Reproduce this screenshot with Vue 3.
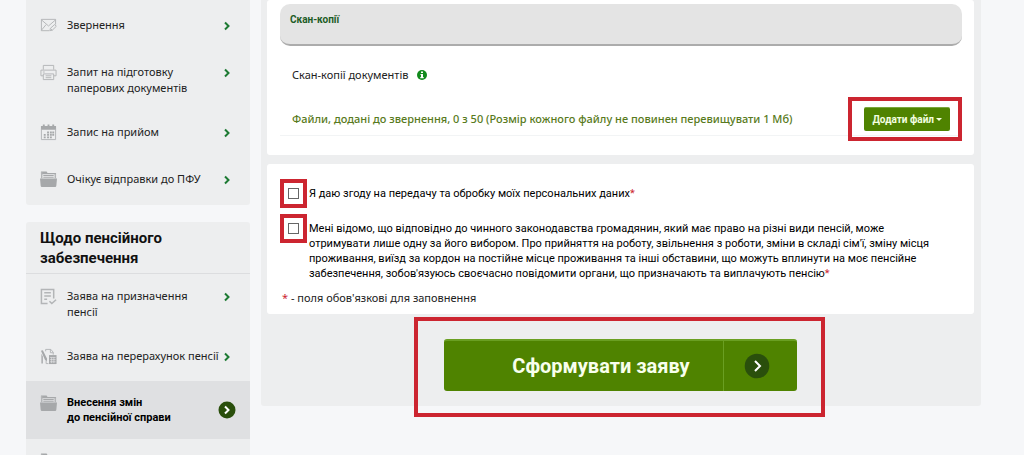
<template>
  <div class="page">
    <aside class="sidebar">
      <nav class="menu menu-requests" aria-label="Запити">
        <a v-for="item in requests" :key="item.label" class="menu-item" href="#">
          <svg class="menu-icon" viewBox="0 0 18 18" aria-hidden="true">
            <path v-for="(p, i) in icons[item.icon]" :key="i" :d="p.d" :class="p.type" />
          </svg>
          <span class="menu-label">{{ item.label }}</span>
          <svg class="menu-arrow" viewBox="0 0 18 18" aria-hidden="true">
            <path d="M7 5.5 L10.5 9 L7 12.5" />
          </svg>
        </a>
      </nav>

      <nav class="menu" aria-labelledby="pension-title">
        <h2 id="pension-title" class="menu-title">Щодо пенсійного забезпечення</h2>
        <a
          v-for="item in pensions"
          :key="item.label"
          class="menu-item"
          :class="{ active: item.active }"
          href="#"
        >
          <svg class="menu-icon" viewBox="0 0 18 18" aria-hidden="true">
            <path v-for="(p, i) in icons[item.icon]" :key="i" :d="p.d" :class="p.type" />
          </svg>
          <span class="menu-label">{{ item.label }}</span>
          <svg class="menu-arrow" viewBox="0 0 18 18" aria-hidden="true">
            <circle v-if="item.active" cx="9" cy="9" r="8.5" />
            <path d="M7 5.5 L10.5 9 L7 12.5" />
          </svg>
        </a>
      </nav>
    </aside>

    <main class="content">
      <section class="card files-card">
        <h3 class="section-title">Скан-копії</h3>
        <p class="scan-label">
          Скан-копії документів
          <svg class="info-icon" viewBox="0 0 10 10" aria-hidden="true">
            <circle cx="5" cy="5" r="5" />
            <path d="M4 1.5h2v1.5h-2z M3.5 4h2.5v3h.7v1.2h-3.4v-1.2h.7v-1.9h-.5z" />
          </svg>
        </p>
        <div class="files-row">
          <span class="files-info">
            Файли, додані до звернення, {{ files.length }} з 50 (Розмір кожного файлу не повинен
            перевищувати 1 Мб)
          </span>
          <div class="marked mark-file">
            <button class="add-btn" type="button">Додати файл<span class="caret"></span></button>
          </div>
        </div>
      </section>

      <section class="card consent-card">
        <div v-for="item in consents" :key="item.id" class="consent">
          <span class="marked mark-check">
            <input :id="item.id" v-model="item.checked" type="checkbox" />
          </span>
          <label :for="item.id">{{ item.text }}<span class="required">*</span></label>
        </div>
        <p class="note"><span class="required">*</span> - поля обов'язкові для заповнення</p>
      </section>

      <div class="submit-row">
        <div class="marked mark-submit">
          <button class="submit-btn" type="button">
            <span class="submit-text">Сформувати заяву</span>
            <span class="submit-side">
              <svg viewBox="0 0 26 26" aria-hidden="true">
                <circle cx="13" cy="13" r="12.3" />
                <path d="M11 8 L16 13 L11 18" />
              </svg>
            </span>
          </button>
        </div>
      </div>
    </main>
  </div>
</template>

<script setup>
import { ref } from 'vue'

// Sidebar items
const requests = [
  { label: 'Звернення', icon: 'mail' },
  { label: 'Запит на підготовку паперових документів', icon: 'printer' },
  { label: 'Запис на прийом', icon: 'calendar' },
  { label: 'Очікує відправки до ПФУ', icon: 'folder' },
]

const pensions = [
  { label: 'Заява на призначення\nпенсії', icon: 'form' },
  { label: 'Заява на перерахунок пенсії', icon: 'recount' },
  { label: 'Внесення змін\nдо пенсійної справи', icon: 'folder', active: true },
  { label: '', icon: 'folder' },
]

// Icon shapes, each either stroked or filled
const icons = {
  mail: [
    { type: 'line', d: 'M10 14.5H1.5V2.5H16.5V8 M1.5 3L9 9.5L16.5 3 M1.5 14L6.5 8' },
    { type: 'line', d: 'M10.5 14.5L11 12L15.5 8L17.3 9.8L13 14Z M11.5 12.5L13 14' },
  ],
  printer: [
    { type: 'line', d: 'M3.5 6V1.5H14.5V6 M3.5 12.5H1V6.5H17V12.5H14.5 M3.5 10.5H14.5V16.5H3.5Z' },
    { type: 'line', d: 'M3 8.5H5 M6 12.5H12 M6 14.5H12' },
  ],
  calendar: [
    { type: 'solid', d: 'M1 2H17V6H1Z M3 0.5H5V3H3Z M8 0.5H10V3H8Z M13 0.5H15V3H13Z' },
    { type: 'line', d: 'M1.5 5V16.5H16.5V5' },
    {
      type: 'solid',
      d: 'M7.5 8H9.5V10H7.5Z M10.5 8H12.5V10H10.5Z M13 8H15V10H13Z M4 10.7H6V12.5H4Z M7.5 10.7H9.5V12.5H7.5Z M10.5 10.7H12.5V12.5H10.5Z M13 10.7H15V12.5H13Z M4 13.2H6V15H4Z M7.5 13.2H9.5V15H7.5Z M10.5 13.2H12.5V15H10.5Z',
    },
  ],
  folder: [
    { type: 'solid', d: 'M1 0.5H7L8 2H17V3.5H1Z M3.5 4.3H14.5V5.3H3.5Z M3.5 6.2H14.5V7.2H3.5Z' },
    { type: 'solid', d: 'M0 8H18L17.3 15.5Q17.2 17 16 17H2Q0.8 17 0.7 15.5Z' },
    { type: 'line thick', d: 'M1.8 1V8 M16.2 3V8' },
  ],
  form: [
    { type: 'line thick', d: 'M8 16.5H1.5V1.5H14.5V11' },
    { type: 'line thick', d: 'M4.5 5H11.5 M4.5 8.5H11.5 M4.5 12H7.5 M10 14L12.5 16.5L17 12.5' },
  ],
  recount: [
    { type: 'line', d: 'M6 3.5V1.5H11.5L14 4.5V7 M11 1.5V5H14 M6.5 13V16.5H9' },
    { type: 'solid', d: 'M1 3L3 2.5L7.5 11.5L7.2 14L5.2 12.5Z M1.5 6L3 9V16.5H1.5Z' },
    { type: 'solid', d: 'M9.5 7.5H17.5V17H9.5Z' },
    { type: 'cut', d: 'M10.5 10H16.5 M10.5 12.3H16.5 M10.5 14.6H16.5 M12.3 10V16 M14.7 10V16' },
  ],
}

const files = ref([])

const consents = ref([
  {
    id: 'personal-data',
    checked: false,
    text: 'Я даю згоду на передачу та обробку моїх персональних даних',
  },
  {
    id: 'pension-choice',
    checked: false,
    text: "Мені відомо, що відповідно до чинного законодавства громадянин, який має право на різні види пенсій, може отримувати лише одну за його вибором. Про прийняття на роботу, звільнення з роботи, зміни в складі сім'ї, зміну місця проживання, виїзд за кордон на постійне місце проживання та інші обставини, що можуть вплинути на моє пенсійне забезпечення, зобов'язуюсь своєчасно повідомити органи, що призначають та виплачують пенсію",
  },
])
</script>

<style>
body {
  margin: 0;
  background: #f6f7f9;
}
</style>

<style scoped>
.page {
  box-sizing: border-box;
  display: flex;
  align-items: flex-start;
  gap: 11px;
  height: 100vh;
  padding: 0 43px 0 26px;
  overflow: hidden;
  background: #f6f7f9;
  font-family: 'Noto Sans', 'Open Sans', sans-serif;
  font-size: 11px;
  line-height: 16px;
  color: #222;
}

/* Sidebar */
.sidebar {
  display: flex;
  flex: 0 0 224px;
  flex-direction: column;
  gap: 17px;
}

.menu {
  background: #edeeef;
  border-radius: 3px;
}

.menu-requests {
  padding: 3px 0 1px;
  border-radius: 0 0 3px 3px;
}

.menu-title {
  margin: 0;
  padding: 6px 60px 5px 14px;
  border-bottom: 1px solid #dcdddf;
  font-family: Roboto, sans-serif;
  font-size: 15px;
  font-weight: 700;
  line-height: 20px;
  color: #111;
}

.menu-item {
  box-sizing: border-box;
  display: flex;
  align-items: flex-start;
  min-height: 47px;
  padding: 14px;
  color: inherit;
  text-decoration: none;
}

.menu-icon {
  flex: none;
  width: 17px;
  height: 17px;
  margin-right: 10px;
}

.menu-icon .line {
  fill: none;
  stroke: #b3b5b7;
  stroke-width: 1;
}

.menu-icon .thick {
  stroke-width: 1.6;
}

.menu-icon .solid {
  fill: #a6a8aa;
}

.menu-icon .cut {
  fill: none;
  stroke: #edeeef;
  stroke-width: 0.6;
}

.menu-label {
  flex: 1;
  white-space: pre-line;
}

/* The arrow glyph is narrower than its box, so long labels may run under its edge */
.menu-arrow {
  flex: none;
  width: 18px;
  height: 18px;
  margin-left: -6px;
}

.menu-arrow path {
  fill: none;
  stroke: #1d7a33;
  stroke-width: 2;
}

.menu-item.active {
  background: #dfe0e2;
  font-family: Roboto, sans-serif;
  font-weight: 700;
  line-height: 15px;
  color: #000;
}

.active .menu-arrow circle {
  fill: #2a4f0c;
}

.active .menu-arrow path {
  stroke: #fff;
}

.active .menu-arrow {
  align-self: center;
}

/* Main column */
.content {
  flex: 1;
  min-width: 0;
  padding: 0 7px 0 6px;
  background: #edeeef;
  border-radius: 0 0 3px 3px;
}

.card {
  background: #fff;
  border-radius: 3px;
}

.files-card {
  padding: 4px 12px 19px 13px;
}

.section-title {
  height: 42px;
  margin: 0;
  padding: 8px 10px 0;
  box-sizing: border-box;
  background: #e4e4e4;
  border-bottom: 2px solid #acacac;
  border-radius: 10px;
  font-family: Roboto, sans-serif;
  font-size: 10px;
  font-weight: 700;
  color: #1d5c26;
}

.scan-label {
  display: flex;
  align-items: center;
  gap: 8px;
  margin: 21px 0 0 12px;
}

.info-icon {
  width: 10px;
  height: 10px;
}

.info-icon circle {
  fill: #128a1c;
}

.info-icon path {
  fill: #fff;
}

.files-row {
  display: flex;
  align-items: center;
  justify-content: space-between;
  margin-top: 20px;
  padding: 4px 12px;
  border-bottom: 1px solid #f2f4f5;
}

.files-info {
  color: #587a20;
  font-weight: 500;
}

.add-btn {
  display: flex;
  align-items: center;
  gap: 2px;
  height: 24px;
  padding: 0 8px;
  background: #4f8300;
  border: none;
  border-top: 1px solid #7aa63c;
  border-radius: 2px;
  font-family: Roboto, sans-serif;
  font-size: 10px;
  font-weight: 700;
  color: #f4ffe0;
  cursor: pointer;
}

.caret {
  border: 3px solid transparent;
  border-top-color: currentColor;
  border-bottom: none;
}

/* Red frames drawn over the controls */
.marked {
  position: relative;
  display: flex;
}

.marked::after {
  content: '';
  position: absolute;
  border: 4px solid #cc2530;
  pointer-events: none;
}

.mark-file::after {
  inset: -10px -12px -10px -16px;
}

.mark-check::after {
  inset: -9px -8px;
}

.mark-submit::after {
  inset: -22px -28px -26px -30px;
}

/* Consents */
.consent-card {
  margin-top: 9px;
  padding: 22px 40px 8px 15px;
}

.consent {
  display: flex;
  align-items: flex-start;
  gap: 10px;
  margin: 0 0 20px 6px;
  font-family: Roboto, sans-serif;
  line-height: 15px;
  color: #000;
}

.consent:last-of-type {
  margin-bottom: 9px;
}

.consent input {
  appearance: none;
  width: 11px;
  height: 11px;
  margin: 0;
  background: #fff;
  border: 1px solid #666;
  border-radius: 0;
}

.consent input:checked {
  background: #4f8300;
}

.mark-check {
  margin-top: 2px;
}

.required {
  color: #cc2530;
}

.note {
  margin: 0;
}

/* Submit */
.submit-row {
  display: flex;
  justify-content: center;
  padding: 25px 0 15px;
}

.submit-btn {
  display: flex;
  height: 52px;
  padding: 0;
  background: #4f8300;
  border: none;
  border-top: 2px solid #6a9f22;
  border-radius: 3px;
  font-family: Roboto, sans-serif;
  font-size: 20px;
  font-weight: 700;
  color: #f8ffec;
  cursor: pointer;
}

.submit-text {
  align-self: center;
  padding: 0 33px 0 68px;
}

.submit-side {
  display: flex;
  align-items: center;
  justify-content: center;
  align-self: stretch;
  width: 74px;
  box-sizing: border-box;
  padding-right: 6px;
  border-left: 1px solid #6a9f22;
}

.submit-side svg {
  width: 26px;
  height: 26px;
}

.submit-side circle {
  fill: #2a4f0c;
}

.submit-side path {
  fill: none;
  stroke: #fff;
  stroke-width: 2;
}
</style>
